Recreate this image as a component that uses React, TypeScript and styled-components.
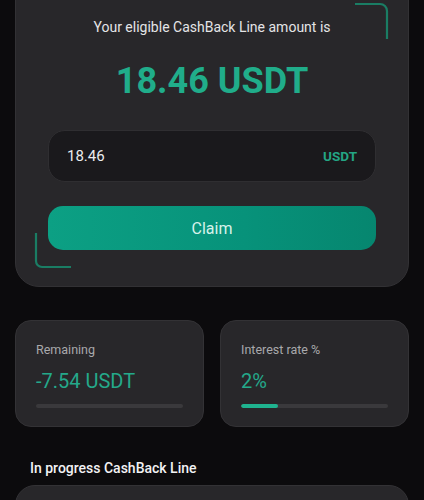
import React from "react";
import styled, { createGlobalStyle } from "styled-components";

const Global = createGlobalStyle`
  html, body { margin: 0; padding: 0; background: #0c0b0d; }
  body { font-family: Roboto, "Noto Sans", "Liberation Sans", sans-serif; overflow: hidden; }
`;

const Page = styled.div`
  display: flex;
  flex-direction: column;
  padding: 0 15px;
  margin-top: -24px;
`;

const MainCard = styled.section`
  position: relative;
  background: #28272a;
  border: 1px solid #323134;
  border-radius: 24px;
  padding: 41px 32px 36px;
  display: flex;
  flex-direction: column;
  align-items: stretch;
`;

const Eligible = styled.div`
  text-align: center;
  font-size: 14px;
  color: #e4e4e6;
  line-height: 18px;
`;

const Amount = styled.div`
  text-align: center;
  font-size: 36px;
  font-weight: 700;
  color: #20ad8a;
  line-height: 40px;
  margin-top: 25px;
`;

const InputBox = styled.div`
  margin-top: 29px;
  height: 52px;
  box-sizing: border-box;
  background: #1a191c;
  border: 1px solid #2f2e31;
  border-radius: 17px;
  display: flex;
  align-items: center;
  justify-content: space-between;
  padding: 0 18px;
`;

const InputValue = styled.span`
  font-size: 15px;
  color: #ececee;
`;

const Unit = styled.span`
  font-size: 13.5px;
  font-weight: 700;
  color: #24a584;
`;

const ClaimButton = styled.button`
  margin-top: 24px;
  height: 44px;
  border: none;
  border-radius: 15px;
  background: linear-gradient(90deg, #0ca084 0%, #07927a 60%, #06866f 100%);
  color: #d6f2ea;
  font-family: inherit;
  font-size: 16px;
  cursor: pointer;
`;

const Bracket = styled.svg<{ $corner: "tr" | "bl" }>`
  position: absolute;
  width: 40px;
  height: 40px;
  ${(p) => (p.$corner === "tr" ? "top: 24px; right: 16px;" : "bottom: 13px; left: 18px;")}
`;

const StatsRow = styled.div`
  display: grid;
  grid-template-columns: 1fr 1fr;
  gap: 16px;
  margin-top: 33px;
`;

const StatCard = styled.div`
  background: #28272a;
  border: 1px solid #333235;
  border-radius: 16px;
  height: 107px;
  box-sizing: border-box;
  padding: 21px 20px 0 20px;
  display: flex;
  flex-direction: column;
`;

const StatLabel = styled.div`
  font-size: 12.5px;
  color: #a9a9ac;
  line-height: 16px;
`;

const StatValue = styled.div`
  font-size: 20px;
  color: #24a98a;
  line-height: 24px;
  margin-top: 11px;
`;

const Track = styled.div`
  margin-top: 11px;
  height: 4px;
  border-radius: 2px;
  background: #3a393c;
  overflow: hidden;
`;

const Fill = styled.div`
  height: 100%;
  background: #1fb38f;
  border-radius: 2px;
`;

const SectionTitle = styled.h3`
  margin: 32px 0 0 15px;
  font-size: 14px;
  font-weight: 500;
  color: #f2f2f4;
  line-height: 18px;
`;

const ProgressCard = styled.div`
  margin-top: 8px;
  height: 60px;
  background: #28272a;
  border: 1px solid #333235;
  border-radius: 20px;
`;

function Stat({ label, value, pct }: { label: string; value: string; pct: number }) {
  return (
    <StatCard>
      <StatLabel>{label}</StatLabel>
      <StatValue>{value}</StatValue>
      <Track>
        <Fill style={{ width: `${pct}%` }} />
      </Track>
    </StatCard>
  );
}

export default function App() {
  return (
    <>
      <Global />
      <Page>
        <MainCard>
          <Bracket $corner="tr" viewBox="0 0 40 40">
            <path d="M3 3 H28 A7 7 0 0 1 35 10 V38" fill="none" stroke="#1a7d64" strokeWidth="2.2" />
          </Bracket>
          <Bracket $corner="bl" viewBox="0 0 40 40">
            <path d="M2 0 V28 A6 6 0 0 0 8 34 H37" fill="none" stroke="#1a7d64" strokeWidth="2.2" />
          </Bracket>
          <Eligible>Your eligible CashBack Line amount is</Eligible>
          <Amount>18.46 USDT</Amount>
          <InputBox>
            <InputValue>18.46</InputValue>
            <Unit>USDT</Unit>
          </InputBox>
          <ClaimButton>Claim</ClaimButton>
        </MainCard>
        <StatsRow>
          <Stat label="Remaining" value="-7.54 USDT" pct={0} />
          <Stat label="Interest rate %" value="2%" pct={25} />
        </StatsRow>
        <SectionTitle>In progress CashBack Line</SectionTitle>
        <ProgressCard />
      </Page>
    </>
  );
}
